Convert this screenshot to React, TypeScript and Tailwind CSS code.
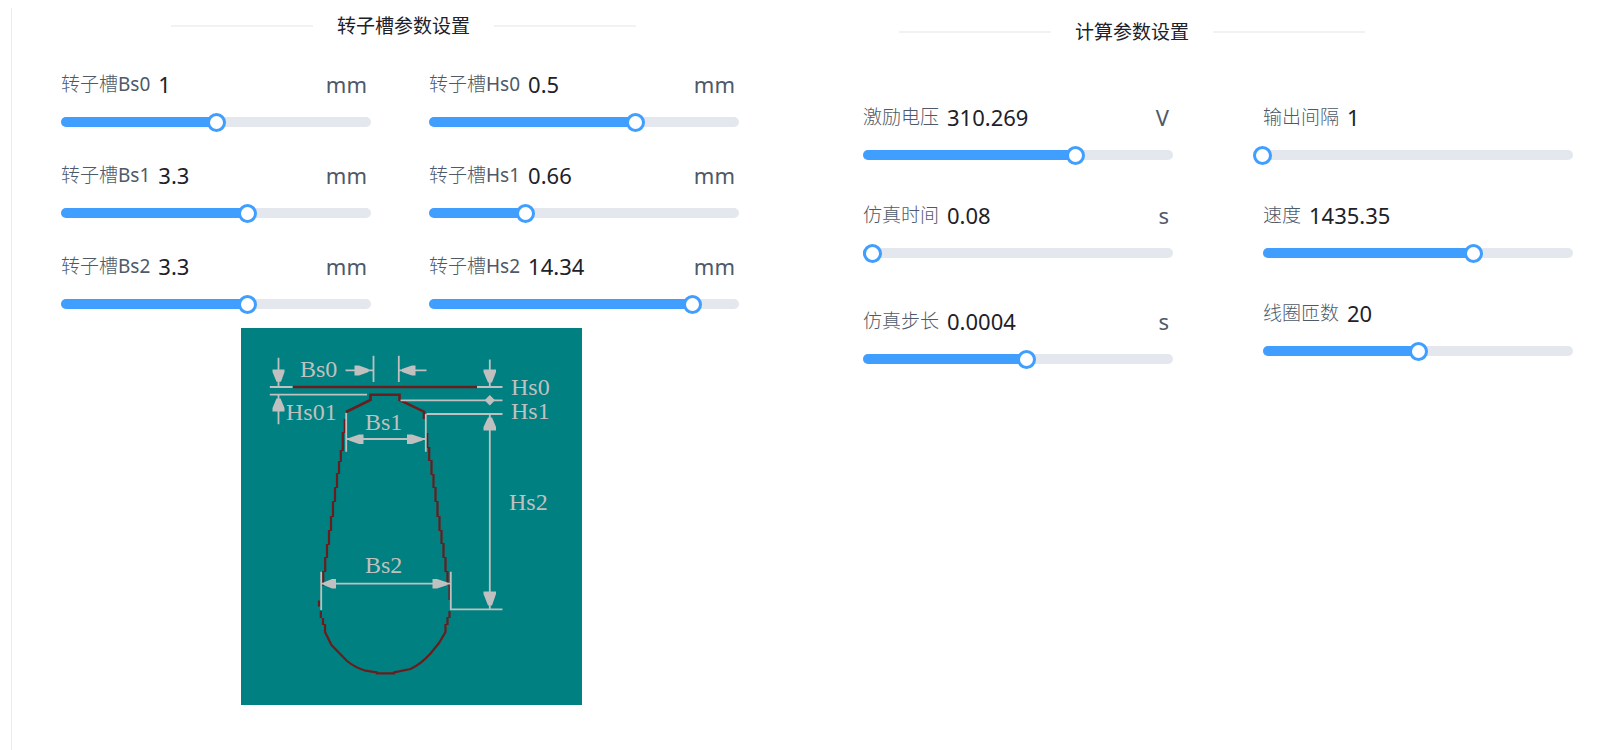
import { useState } from 'react'

interface Param {
  id: string
  label: string
  symbol?: string
  value: number
  min: number
  max: number
  unit?: string
}

const slotParams: Param[] = [
  { id: 'bs0', label: '转子槽', symbol: 'Bs0', value: 1, min: 0, max: 2, unit: 'mm' },
  { id: 'hs0', label: '转子槽', symbol: 'Hs0', value: 0.5, min: 0, max: 0.75, unit: 'mm' },
  { id: 'bs1', label: '转子槽', symbol: 'Bs1', value: 3.3, min: 0, max: 5.5, unit: 'mm' },
  { id: 'hs1', label: '转子槽', symbol: 'Hs1', value: 0.66, min: 0, max: 2.12, unit: 'mm' },
  { id: 'bs2', label: '转子槽', symbol: 'Bs2', value: 3.3, min: 0, max: 5.5, unit: 'mm' },
  { id: 'hs2', label: '转子槽', symbol: 'Hs2', value: 14.34, min: 0, max: 16.87, unit: 'mm' },
]

const solverParams: Param[] = [
  { id: 'voltage', label: '激励电压', value: 310.269, min: 0, max: 454, unit: 'V' },
  { id: 'time', label: '仿真时间', value: 0.08, min: 0, max: 2.5, unit: 's' },
  { id: 'step', label: '仿真步长', value: 0.0004, min: 0, max: 0.00076, unit: 's' },
]

const outputParams: Param[] = [
  { id: 'interval', label: '输出间隔', value: 1, min: 1, max: 100 },
  { id: 'speed', label: '速度', value: 1435.35, min: 0, max: 2114 },
  { id: 'turns', label: '线圈匝数', value: 20, min: 0, max: 40 },
]

function SectionTitle({ children }: { children: string }) {
  return (
    <div className="flex h-9 items-center gap-6">
      <span className="h-[2px] flex-1 bg-[#f2f2f2]" />
      <h2 className="text-[19px] leading-7 text-[#1d2129]">{children}</h2>
      <span className="h-[2px] flex-1 bg-[#f2f2f2]" />
    </div>
  )
}

function ParamField({ param }: { param: Param }) {
  const [text, setText] = useState(String(param.value))
  const value = Number(text) || 0
  const percent = Math.min(100, Math.max(0, ((value - param.min) / (param.max - param.min)) * 100))

  return (
    <div>
      <div className="flex h-8 items-center gap-2 pr-1 text-[#4e5969]">
        <label htmlFor={param.id} className="shrink-0 text-[19px] font-light leading-8">
          {param.label}
          {param.symbol && <span className="font-normal">{param.symbol}</span>}
        </label>
        <input
          id={param.id}
          type="text"
          value={text}
          onChange={e => setText(e.target.value)}
          className="h-8 w-0 min-w-0 flex-1 bg-transparent text-[22px] leading-8 text-[#1d2129] outline-none"
        />
        {param.unit && <span className="text-[22px] leading-8">{param.unit}</span>}
      </div>

      <div className="relative mt-3 flex h-5 items-center">
        <div className="h-[10px] w-full overflow-hidden rounded-full bg-[#e4e7ed]">
          <div className="h-full bg-[#409eff]" style={{ width: `${percent}%` }} />
        </div>
        {/* wider than the track so the thumb centre can reach both ends */}
        <input
          type="range"
          aria-label={`${param.label}${param.symbol ?? ''}`}
          min={param.min}
          max={param.max}
          step="any"
          value={value}
          onChange={e => setText(String(Number(Number(e.target.value).toPrecision(4))))}
          className="absolute -left-[10px] top-0 h-5 w-[calc(100%+20px)] cursor-pointer appearance-none bg-transparent outline-none [&::-webkit-slider-thumb]:h-[19px] [&::-webkit-slider-thumb]:w-[19px] [&::-webkit-slider-thumb]:appearance-none [&::-webkit-slider-thumb]:rounded-full [&::-webkit-slider-thumb]:border-3 [&::-webkit-slider-thumb]:border-[#409eff] [&::-webkit-slider-thumb]:bg-white"
        />
      </div>
    </div>
  )
}

function SlotDiagram() {
  return (
    <svg width="341" height="377" viewBox="0 0 341 377" role="img" aria-label="转子槽" className="bg-[#008080]">
      {/* slot outline */}
      <g fill="none" stroke="#6b1c1c" strokeWidth="2.2">
        <path d="M52 59H236" strokeWidth="2.6" />
        <path d="M105 84L129.500 72V66.700H158.500V72L183 83.700V91" strokeWidth="2.6" />
        {/* stepped side walls */}
        <path d="M103.800 91V105M101.800 104V123M99.800 122V134M98 133V146M96 145V160M94 159V174M92 173V189M90 188V203M88 202V217M86 216V230M84.200 229V244M82.200 243V258" />
        <path d="M186.200 105V120M188.200 119V133M190.500 132V147M192.500 146V160M194.500 159V174M196.500 173V189M198.500 188V203M200.500 202V216M202.500 215V230M204.500 229V244M206.500 243V257M208.500 256V272" />
        <path d="M78 272.500V278.500M79.800 283V290M82 290V297M84 296V304L90.500 317L106 333Q114 339.500 124.500 342.700L136 344.500V345.300H153V344.500L169.500 341Q180 336 189.500 325.500L198 315L204.500 304V296M206.500 297V289M208.500 290V283" />
      </g>

      {/* dimension lines */}
      <g fill="none" stroke="#c0c0c0" strokeWidth="1.8">
        <path d="M104.500 42.300H132M158 42.300H185.500M132.500 27.700V54M157.800 27.700V54" />
        <path d="M37.500 29.700V58M28.800 59H51.500M236 59H261.500" />
        <path d="M28.800 66.700H126M37.500 66.700V96.300" />
        <path d="M248.800 31.500V58M159.500 72.300H261.500M185.500 86H261.500" />
        <path d="M105.200 85V123.700M184.800 86V123.700M105.200 111H184.800" />
        <path d="M80.200 243.700V282M209.800 243.700V281.300H261.500M80.200 255.700H209.800M248.800 87V281" />
      </g>

      {/* arrow heads */}
      <g fill="#c0c0c0">
        <path d="M113.500 37.500H118L127.500 41V44L118 47.500H113.500Z" />
        <path d="M174.500 37.500H171L161 41V44L171 47.500H174.500Z" />
        <path d="M31.500 41.500H43.500V44L40 53.700H35.500L31.500 44Z" />
        <path d="M31.500 83.500H43.500V80L39.500 70.500H35.500L31.500 80Z" />
        <path d="M242.500 41.500H255V44L251 54.500H247L242.500 44Z" />
        <path d="M248.800 67L254 72.300L248.800 77.600L243.600 72.300Z" />
        <path d="M242.500 102.500H255V99L251 89.500H247L242.500 99Z" />
        <path d="M242.500 263.500H255V266L251 277.500H247L242.500 266Z" />
        <path d="M122.500 106.500H118L108 110V112.500L118 116H122.500Z" />
        <path d="M166 106.500H171L181.500 110V112.500L171 116H166Z" />
        <path d="M95 251H91L82.500 254.500V257L91 260.500H95Z" />
        <path d="M191.500 251H196L206.500 254.500V257L196 260.500H191.500Z" />
      </g>

      <g fill="#c0c0c0" className="font-['Liberation_Serif',serif] text-[24px]">
        <text x="59" y="49">Bs0</text>
        <text x="45" y="92">Hs01</text>
        <text x="270" y="67">Hs0</text>
        <text x="270" y="91">Hs1</text>
        <text x="124" y="102">Bs1</text>
        <text x="268" y="182">Hs2</text>
        <text x="124" y="245">Bs2</text>
      </g>
    </svg>
  )
}

export default function App() {
  return (
    <main className="grid min-h-screen grid-cols-2 bg-white pt-2 font-['Noto_Sans','Noto_Sans_CJK_SC',sans-serif]">
      <section className="ml-[11px] border-l border-[#ebebeb] pl-[49px] pr-[65px]">
        <div className="ml-[110px] mr-[103px]">
          <SectionTitle>转子槽参数设置</SectionTitle>
        </div>
        <div className="mt-6 grid grid-cols-2 gap-x-[58px] gap-y-[27px]">
          {slotParams.map(param => <ParamField key={param.id} param={param} />)}
        </div>
        <div className="mt-[14px] flex justify-center pl-[22px]">
          <SlotDiagram />
        </div>
      </section>

      <section className="pl-[59px] pr-[35px] pt-[6px]">
        <div className="ml-9 mr-52">
          <SectionTitle>计算参数设置</SectionTitle>
        </div>
        <div className="mt-[51px] grid grid-cols-2 gap-x-[90px]">
          <div className="flex flex-col gap-[34px] *:last:mt-2">
            {solverParams.map(param => <ParamField key={param.id} param={param} />)}
          </div>
          <div className="flex flex-col gap-[34px]">
            {outputParams.map(param => <ParamField key={param.id} param={param} />)}
          </div>
        </div>
      </section>
    </main>
  )
}
